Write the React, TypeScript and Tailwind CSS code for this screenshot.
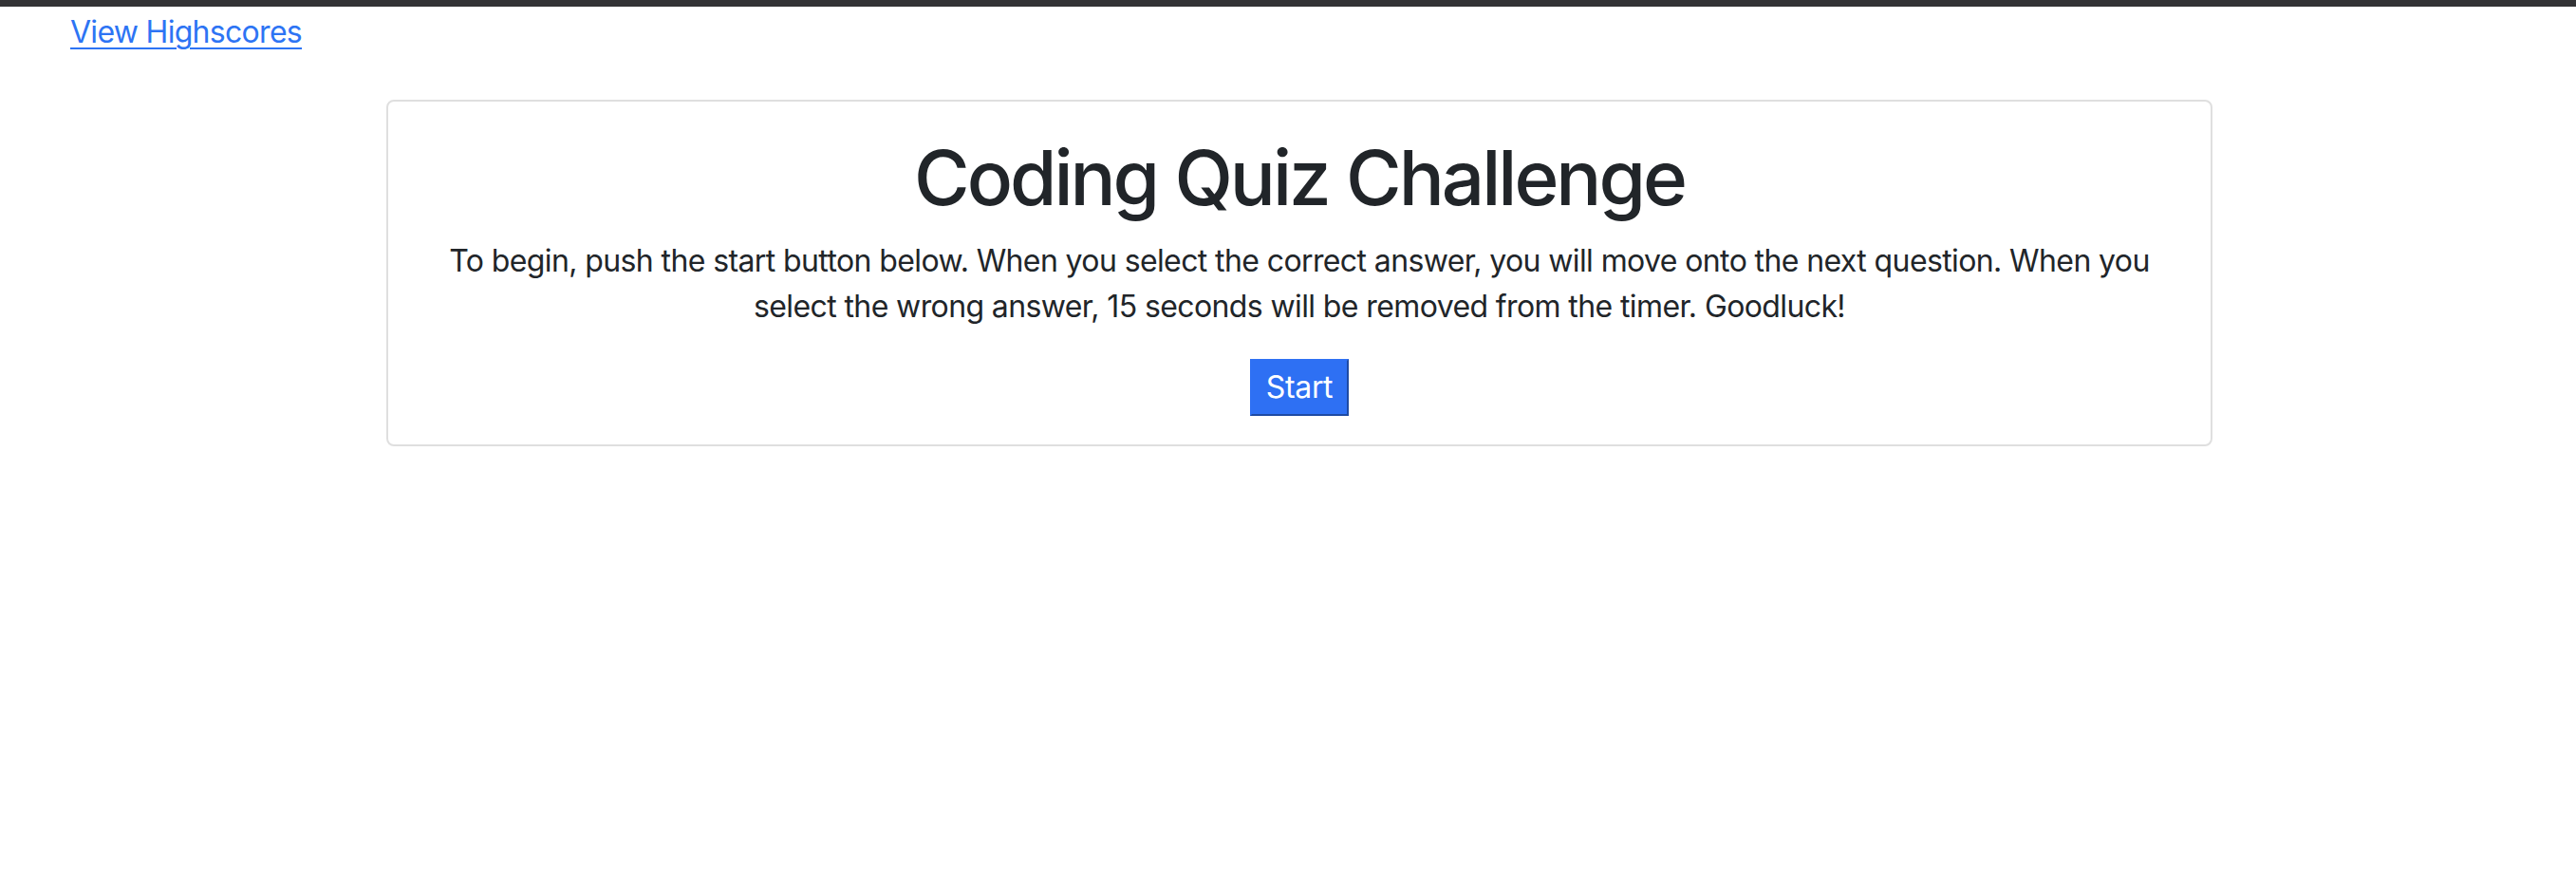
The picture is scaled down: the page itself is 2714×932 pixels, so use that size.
import React from "react";

export default function App() {
  return (
    <div
      className="min-h-[932px] w-full bg-white text-[#212529]"
      style={{ fontFamily: "Inter, 'Noto Sans', 'Liberation Sans', sans-serif" }}
    >
      <div className="h-[7px] w-full bg-[#333335]" />
      <div className="pt-[3px] pl-[74px] text-[32px] leading-[48px] tracking-[-0.022em]">
        <a href="#" className="text-[#2d74f4] underline underline-offset-[5px] decoration-2">
          View Highscores
        </a>
      </div>
      <div className="mt-[47px] ml-[407px] w-[1924px] rounded-[8px] border-2 border-[#dfdfdf] px-[40px] pt-[32px] pb-[30px] text-center">
        <h1 className="mb-[16px] text-[80px] font-medium leading-[96px] tracking-[-0.038em] text-[#212529]">
          Coding Quiz Challenge
        </h1>
        <p className="mb-[31px] text-[32px] leading-[48px] tracking-[-0.019em] text-[#212529]">
          To begin, push the start button below. When you select the correct answer, you will move onto the next question. When you
          <br />
          select the wrong answer, 15 seconds will be removed from the timer. Goodluck!
        </p>
        <button
          type="button"
          className="h-[60px] border-2 border-t-[#2e70f3] border-l-[#2e70f3] border-r-[#1e4aa3] border-b-[#1e4aa3] bg-[#2e70f3] px-[15px] text-[32px] leading-[40px] tracking-[-0.01em] text-white"
        >
          Start
        </button>
      </div>
    </div>
  );
}
